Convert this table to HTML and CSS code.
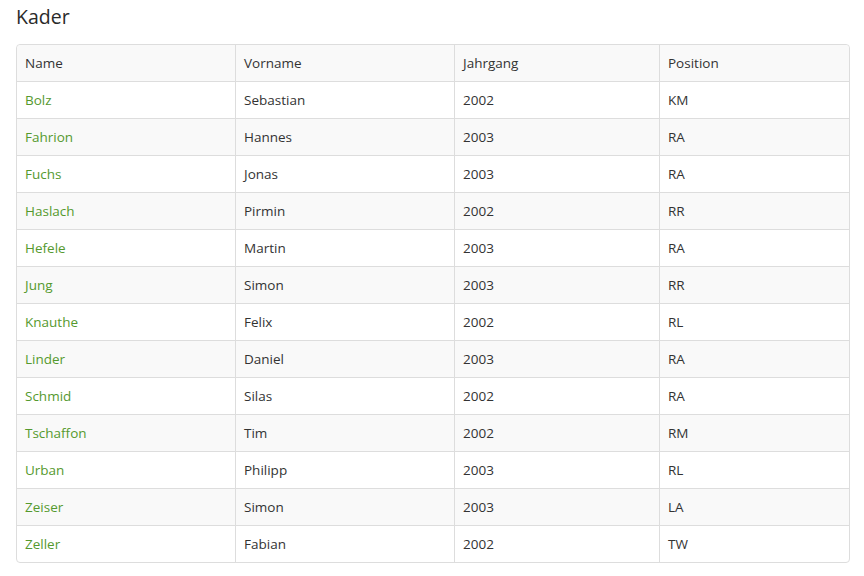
FILE: index.html
```html
<!DOCTYPE html>
<html lang="de">
<head>
<meta charset="utf-8">
<title>Kader</title>
<link rel="stylesheet" href="styles.css">
</head>
<body>
<h2 class="title">Kader</h2>
<table class="roster">
  <colgroup>
    <col class="c1"><col class="c2"><col class="c3"><col class="c4">
  </colgroup>
  <thead>
    <tr><th>Name</th><th>Vorname</th><th>Jahrgang</th><th>Position</th></tr>
  </thead>
  <tbody>
    <tr><td><a href="#">Bolz</a></td><td>Sebastian</td><td>2002</td><td>KM</td></tr>
    <tr><td><a href="#">Fahrion</a></td><td>Hannes</td><td>2003</td><td>RA</td></tr>
    <tr><td><a href="#">Fuchs</a></td><td>Jonas</td><td>2003</td><td>RA</td></tr>
    <tr><td><a href="#">Haslach</a></td><td>Pirmin</td><td>2002</td><td>RR</td></tr>
    <tr><td><a href="#">Hefele</a></td><td>Martin</td><td>2003</td><td>RA</td></tr>
    <tr><td><a href="#">Jung</a></td><td>Simon</td><td>2003</td><td>RR</td></tr>
    <tr><td><a href="#">Knauthe</a></td><td>Felix</td><td>2002</td><td>RL</td></tr>
    <tr><td><a href="#">Linder</a></td><td>Daniel</td><td>2003</td><td>RA</td></tr>
    <tr><td><a href="#">Schmid</a></td><td>Silas</td><td>2002</td><td>RA</td></tr>
    <tr><td><a href="#">Tschaffon</a></td><td>Tim</td><td>2002</td><td>RM</td></tr>
    <tr><td><a href="#">Urban</a></td><td>Philipp</td><td>2003</td><td>RL</td></tr>
    <tr><td><a href="#">Zeiser</a></td><td>Simon</td><td>2003</td><td>LA</td></tr>
    <tr><td><a href="#">Zeller</a></td><td>Fabian</td><td>2002</td><td>TW</td></tr>
  </tbody>
</table>
</body>
</html>
```
FILE: styles.css
```css
html, body {
  margin: 0;
  background: #fff;
}
body {
  padding: 0 14px 0 16px;
  font-family: "Open Sans", "Liberation Sans", sans-serif;
  font-size: 13.5px;
  color: #333;
}
.title {
  margin: 0;
  padding-top: 4px;
  height: 44px;
  box-sizing: border-box;
  font-size: 19.5px;
  font-weight: 400;
  line-height: 26px;
  color: #2a2a2a;
}
.roster {
  width: 834px;
  table-layout: fixed;
  border-collapse: separate;
  border-spacing: 0;
  border: 1px solid #ddd;
  border-radius: 4px;
}
.c1 { width: 218px; }
.c2 { width: 219px; }
.c3 { width: 205px; }
.c4 { width: 190px; }
.roster th,
.roster td {
  padding: 8px;
  line-height: 20px;
  text-align: left;
  font-weight: 400;
  border-left: 1px solid #ddd;
  border-top: 1px solid #ddd;
}
.roster th:first-child,
.roster td:first-child {
  border-left: 0;
}
.roster thead th {
  border-top: 0;
  background: #f9f9f9;
}
.roster thead th:first-child { border-top-left-radius: 4px; }
.roster thead th:last-child { border-top-right-radius: 4px; }
.roster tbody tr:nth-child(even) td {
  background: #f9f9f9;
}
.roster tbody tr:last-child td:first-child { border-bottom-left-radius: 4px; }
.roster tbody tr:last-child td:last-child { border-bottom-right-radius: 4px; }
.roster a {
  color: #55992e;
  text-decoration: none;
}
```
